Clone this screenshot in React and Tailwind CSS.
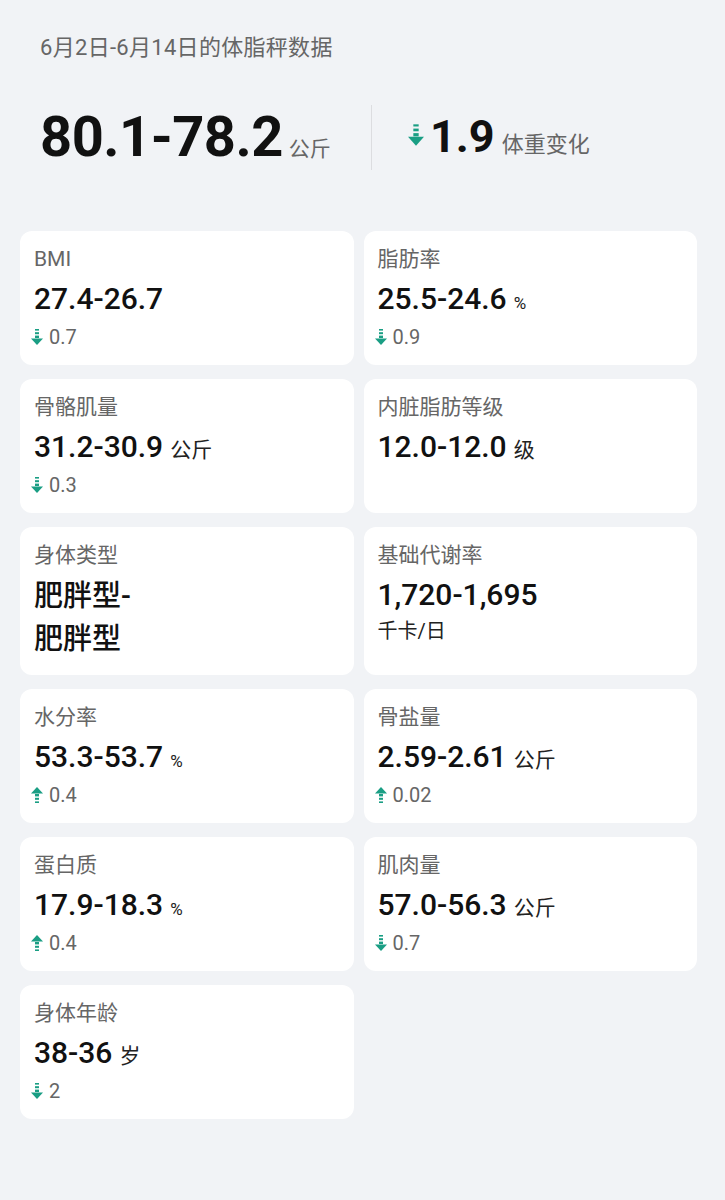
import React from "react";

const FONT = { fontFamily: 'Roboto, "Noto Sans CJK SC", sans-serif' };

function Arrow({ up = false, className = "" }) {
  return (
    <svg viewBox="0 0 12 16" className={className} style={up ? { transform: "scaleY(-1)" } : undefined}>
      <rect x="4" y="0" width="4" height="1.6" fill="#1a9e84" />
      <rect x="4" y="3.2" width="4" height="2" fill="#1a9e84" />
      <rect x="4" y="6.6" width="4" height="2.4" fill="#1a9e84" />
      <polygon points="0,9.4 12,9.4 6,16" fill="#1a9e84" />
    </svg>
  );
}

const cards = [
  { title: "BMI", value: "27.4-26.7", delta: "0.7", dir: "down" },
  { title: "脂肪率", value: "25.5-24.6", unit: "%", small: true, delta: "0.9", dir: "down" },
  { title: "骨骼肌量", value: "31.2-30.9", unit: "公斤", delta: "0.3", dir: "down" },
  { title: "内脏脂肪等级", value: "12.0-12.0", unit: "级" },
  { title: "身体类型", lines: ["肥胖型-", "肥胖型"] },
  { title: "基础代谢率", value: "1,720-1,695", blockUnit: "千卡/日" },
  { title: "水分率", value: "53.3-53.7", unit: "%", small: true, delta: "0.4", dir: "up" },
  { title: "骨盐量", value: "2.59-2.61", unit: "公斤", delta: "0.02", dir: "up" },
  { title: "蛋白质", value: "17.9-18.3", unit: "%", small: true, delta: "0.4", dir: "up" },
  { title: "肌肉量", value: "57.0-56.3", unit: "公斤", delta: "0.7", dir: "down" },
  { title: "身体年龄", value: "38-36", unit: "岁", delta: "2", dir: "down" },
];

function Card({ c }) {
  return (
    <div className="bg-white rounded-[12px] px-[14px] pt-[14px] pb-[14px]">
      <div className="h-[28px] text-[21px] leading-[28px] text-[#666666] whitespace-nowrap">{c.title}</div>
      {c.lines ? (
        <div className="mt-[6px]">
          {c.lines.map((l, i) => (
            <div key={i} className="h-[43px] text-[29px] leading-[43px] font-medium text-[#111]">{l}</div>
          ))}
        </div>
      ) : (
        <div className="mt-[6px] h-[40px] flex items-baseline whitespace-nowrap">
          <span className="text-[30px] leading-[40px] font-medium text-[#111]">{c.value}</span>
          {c.unit && (
            <span className={`${c.small ? "text-[17px]" : "text-[21px]"} leading-[40px] ml-[7px] text-[#222]`}>{c.unit}</span>
          )}
        </div>
      )}
      {c.blockUnit && (
        <div className="h-[32px] text-[20px] leading-[32px] text-[#222]">{c.blockUnit}</div>
      )}
      {c.delta && (
        <div className="mt-[4px] h-[28px] flex items-center -ml-[3px]">
          <Arrow up={c.dir === "up"} className="w-[12px] h-[16px]" />
          <span className="ml-[6px] text-[20px] leading-[28px] text-[#666666]">{c.delta}</span>
        </div>
      )}
    </div>
  );
}

export default function App() {
  return (
    <div style={FONT} className="min-h-[1200px] w-[725px] bg-[#f1f3f6]">
      <div className="pl-[40px] pt-[34px] h-[62px] text-[22px] leading-[28px] text-[#666666] tracking-[0.3px]">6月2日-6月14日的体脂秤数据</div>
      <div className="mt-[43px] pl-[40px] flex items-center h-[65px]">
        <div className="w-[331px] flex items-baseline">
          <span className="text-[56px] font-bold text-[#111] tracking-[-0.5px] leading-none">80.1-78.2</span>
          <span className="ml-[6px] text-[21px] text-[#666666]">公斤</span>
        </div>
        <div className="h-[65px] border-l border-[#dcdde0]"></div>
        <div className="pl-[36px] flex items-baseline">
          <Arrow className="w-[16px] h-[22px] self-center -mt-[6px]" />
          <span className="ml-[6px] text-[45px] font-bold text-[#111] leading-none">1.9</span>
          <span className="ml-[7px] text-[22px] text-[#666666]">体重变化</span>
        </div>
      </div>
      <div className="mt-[61px] pl-[20px] pr-[28px] grid grid-cols-2 gap-x-[10px] gap-y-[14px]">
        {cards.map((c, i) => (
          <Card key={i} c={c} />
        ))}
      </div>
    </div>
  );
}
